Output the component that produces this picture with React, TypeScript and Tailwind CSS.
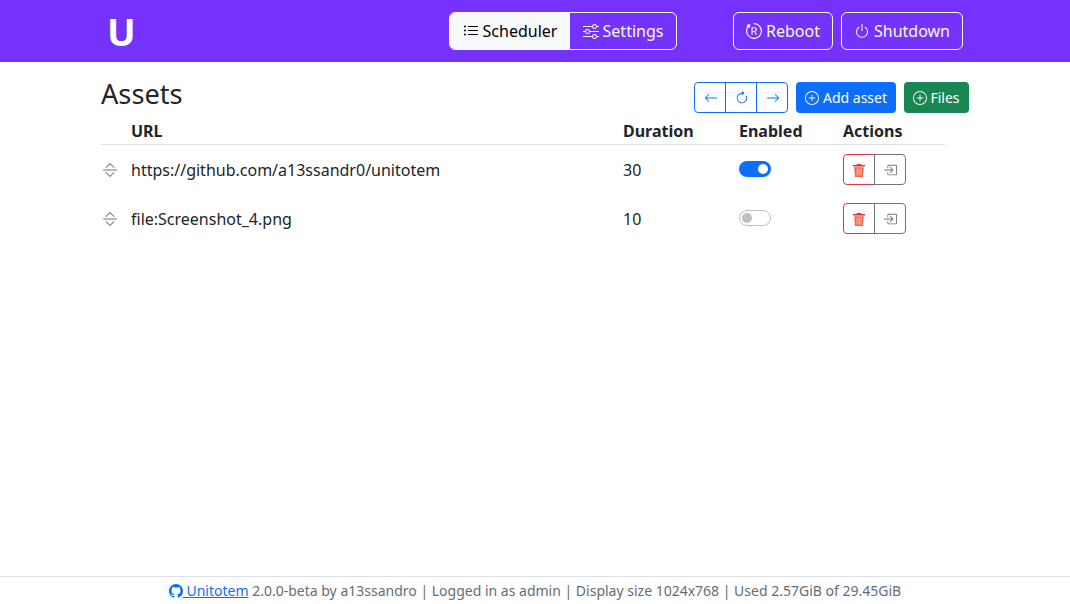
import {
  BsArrowClockwise,
  BsArrowLeft,
  BsArrowRight,
  BsBootstrapReboot,
  BsBoxArrowInRight,
  BsChevronBarExpand,
  BsGithub,
  BsListUl,
  BsPlusCircle,
  BsPower,
  BsSliders,
} from "react-icons/bs";

const assets = [
  { url: "https://github.com/a13ssandr0/unitotem", duration: 30, enabled: true },
  { url: "file:Screenshot_4.png", duration: 10, enabled: false },
];

function Toggle({ on }: { on: boolean }) {
  return on ? (
    <div className="flex h-4 w-8 items-center justify-end rounded-full bg-[#0d6efd] px-[3px]">
      <div className="h-[10px] w-[10px] rounded-full bg-white" />
    </div>
  ) : (
    <div className="flex h-4 w-8 items-center rounded-full border border-[#bfbfbf] bg-white px-[2px]">
      <div className="h-[10px] w-[10px] rounded-full bg-[#bfbfbf]" />
    </div>
  );
}

function TrashIcon() {
  return (
    <svg viewBox="0 0 14 14" className="h-[14px] w-[14px]">
      <path d="M5 1h4l.5 1H13v1.4H1V2h3.5z" fill="#dc3545" />
      <path d="M2.2 4.2h9.6L11 14H3z" fill="#ee6a4c" />
      <path d="M4.6 5.5h1v7h-1zM6.6 5.5h1v7h-1zM8.6 5.5h1v7h-1z" fill="#fbc0a4" />
    </svg>
  );
}

export default function App() {
  return (
    <div className="flex h-screen flex-col bg-white font-['Noto_Sans',sans-serif] text-[#212529]">
      <nav className="flex h-[62px] shrink-0 items-center bg-[#7532fa] pl-[107px]">
        <div className="w-[342px] text-[38px] leading-none font-bold text-white">U</div>
        <div className="flex h-[38px] w-[228px] rounded-md border border-[#f8f9fa] text-[16px]">
          <button className="flex w-[120px] items-center justify-center gap-1 rounded-l-[5px] bg-[#f8f9fa] text-black">
            <BsListUl className="h-4 w-4" />
            Scheduler
          </button>
          <button className="flex flex-1 items-center justify-center gap-1 text-[#f8f9fa]">
            <BsSliders className="h-4 w-4" />
            Settings
          </button>
        </div>
        <button className="ml-14 flex h-[38px] w-[100px] items-center justify-center gap-1 rounded-md border border-[#f8f9fa] text-[16px] text-[#f8f9fa]">
          <BsBootstrapReboot className="h-4 w-4" />
          Reboot
        </button>
        <button className="ml-2 flex h-[38px] w-[122px] items-center justify-center gap-1 rounded-md border border-[#f8f9fa] text-[16px] text-[#f8f9fa]">
          <BsPower className="h-4 w-4" />
          Shutdown
        </button>
      </nav>

      <main className="flex-1 pt-5 pl-[101px]">
        <div className="flex h-[31px] w-[868px] justify-between">
          <h1 className="text-[27.2px] leading-[24px]">Assets</h1>
          <div className="flex items-center gap-2 text-[14px]">
            <div className="flex h-[31px] w-[94px] rounded border border-[#0d6efd] text-[#0d6efd]">
              <button className="flex flex-1 items-center justify-center pl-px">
                <BsArrowLeft className="h-[14px] w-[14px]" />
              </button>
              <button className="flex flex-1 items-center justify-center border-x border-[#0d6efd] pl-px">
                <BsArrowClockwise className="h-[14px] w-[14px]" />
              </button>
              <button className="flex flex-1 items-center justify-center pl-px">
                <BsArrowRight className="h-[14px] w-[14px]" />
              </button>
            </div>
            <button className="flex h-[31px] w-[100px] items-center justify-center gap-1 rounded bg-[#0d6efd] text-white">
              <BsPlusCircle className="h-[14px] w-[14px]" />
              Add asset
            </button>
            <button className="flex h-[31px] w-[65px] items-center justify-center gap-[3px] rounded bg-[#198754] text-white">
              <BsPlusCircle className="h-[14px] w-[14px]" />
              Files
            </button>
          </div>
        </div>

        <div className="mt-[5px] w-[844px] text-[16px]">
          <div className="grid h-[27px] grid-cols-[30px_492px_116px_104px_102px] items-center border-b border-[#dee2e6] font-bold">
            <div />
            <div>URL</div>
            <div>Duration</div>
            <div>Enabled</div>
            <div>Actions</div>
          </div>
          {assets.map((a) => (
            <div
              key={a.url}
              className="grid h-[49px] grid-cols-[30px_492px_116px_104px_102px] items-center"
            >
              <BsChevronBarExpand className="ml-px h-4 w-4 text-[#6c757d]" />
              <div>{a.url}</div>
              <div>{a.duration}</div>
              <div className="-mt-[2px]">
                <Toggle on={a.enabled} />
              </div>
              <div className="flex h-[31px] w-[63px] text-[14px]">
                <button className="flex w-8 items-center justify-center rounded-l border border-[#dc3545]">
                  <TrashIcon />
                </button>
                <button className="-ml-px flex w-8 items-center justify-center rounded-r border border-[#6c757d] text-[#6c757d]">
                  <BsBoxArrowInRight className="h-[14px] w-[14px]" />
                </button>
              </div>
            </div>
          ))}
        </div>
      </main>

      <footer className="flex h-[28px] shrink-0 items-center justify-center border-t border-[#dee2e6] text-[14px] text-[#666d75]">
        <a href="#" className="text-[#0d6efd] underline">
          <BsGithub className="inline h-[14px] w-[14px] align-[-2px]" /> Unitotem
        </a>
        <span className="whitespace-pre"> 2.0.0-beta by a13ssandro | Logged in as admin | Display size 1024x768 | Used 2.57GiB of 29.45GiB</span>
      </footer>
    </div>
  );
}
